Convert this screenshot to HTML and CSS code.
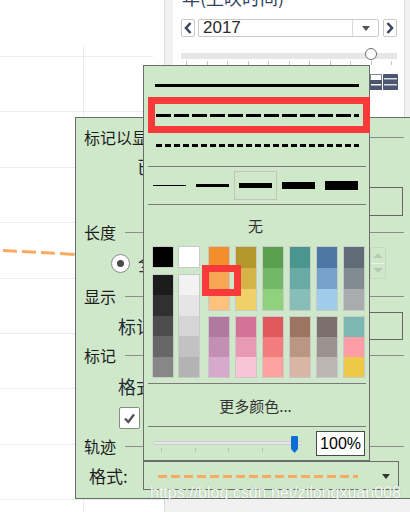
FILE: index.html
```html
<!DOCTYPE html>
<html lang="zh">
<head>
<meta charset="utf-8">
<title>Line style</title>
<link rel="stylesheet" href="styles.css">
</head>
<body>
<div class="screen">
  <div class="chart">
    <svg class="chart-svg" width="164" height="512" viewBox="0 0 164 512">
      <g stroke="#ececec" stroke-width="1">
        <line x1="0" y1="56.5" x2="153" y2="56.5"/>
        <line x1="0" y1="111.5" x2="153" y2="111.5"/>
        <line x1="0" y1="167.5" x2="153" y2="167.5"/>
        <line x1="0" y1="222.5" x2="153" y2="222.5"/>
        <line x1="0" y1="278.5" x2="153" y2="278.5"/>
        <line x1="0" y1="333.5" x2="153" y2="333.5"/>
        <line x1="0" y1="388.5" x2="153" y2="388.5"/>
        <line x1="0" y1="444.5" x2="153" y2="444.5"/>
        <line x1="0" y1="499.5" x2="164" y2="499.5"/>
        <line x1="83.5" y1="45" x2="83.5" y2="512"/>
      </g>
      <line x1="3" y1="250.5" x2="76" y2="254.5" stroke="#fbab62" stroke-width="3" stroke-dasharray="14 5"/>
      <circle cx="79" cy="254" r="4.5" fill="#5b7fb5"/>
    </svg>
  </div>
  <div class="side">
    <div class="card">
      <div class="title">年(上映时间)</div>
      <div class="year-row">
        <div class="nav">
          <svg width="10" height="14" viewBox="0 0 10 14"><polyline points="7.5,2 3,7 7.5,12" fill="none" stroke="#3b4760" stroke-width="2.6"/></svg>
        </div>
        <div class="select">
          <span class="select-value">2017</span>
          <span class="select-btn"><span class="tri-down"></span></span>
        </div>
        <div class="nav">
          <svg width="10" height="14" viewBox="0 0 10 14"><polyline points="2.5,2 7,7 2.5,12" fill="none" stroke="#3b4760" stroke-width="2.6"/></svg>
        </div>
      </div>
      <div class="slider"><span class="knob"></span></div>
      <div class="ticks"><span></span><span></span><span></span><span></span><span></span><span></span><span></span><span></span><span></span><span></span><span></span></div>
      <div class="icons">
        <svg width="28" height="16" viewBox="0 0 28 16">
          <rect x="0.5" y="0.5" width="11" height="15" fill="#fff" stroke="#7d879a"/>
          <rect x="0" y="6" width="12" height="10" fill="#4b5770"/>
          <rect x="1" y="10" width="10" height="1.5" fill="#fff"/>
          <rect x="13" y="0" width="15" height="16" rx="1" fill="#4b5770"/>
          <rect x="14" y="4" width="13" height="1.5" fill="#d9dde4"/>
          <rect x="14" y="10" width="13" height="1.5" fill="#d9dde4"/>
        </svg>
      </div>
    </div>
  </div>

  <div class="dialog">
    <div class="hdr"><span>标记以显示</span><i class="rule"></i></div>
    <div class="row r2"><span class="big">已选择</span></div>
    <div class="row r3"><span class="box"></span></div>
    <div class="hdr h-gap5"><span>长度</span><i class="rule"></i></div>
    <div class="row r5">
      <span class="radio"><span class="radio-dot"></span></span>
      <span class="big r5-text">全部</span>
      <span class="spin"><span class="spin-up"></span><span class="spin-down"></span></span>
    </div>
    <div class="hdr h-gap6"><span>显示</span><i class="rule"></i></div>
    <div class="row r7"><span class="big">标记标签</span><span class="box box-r7"></span></div>
    <div class="hdr h-gap4"><span>标记</span><i class="rule"></i></div>
    <div class="row r9"><span class="big">格式</span></div>
    <div class="row r10">
      <span class="check">
        <svg width="19" height="20" viewBox="0 0 19 20"><polyline points="5,10.5 8.3,14 14,6.5" fill="none" stroke="#555" stroke-width="2.4"/></svg>
      </span>
    </div>
    <div class="hdr h-gap6"><span>轨迹</span><i class="rule"></i></div>
    <div class="row r12">
      <span class="fmt-label">格式:</span>
      <div class="combo"><span class="combo-line"></span><span class="combo-arrow"></span></div>
    </div>
  </div>

  <div class="popup">
    <div class="ls ls-first"><i class="solid"></i></div>
    <div class="ls"><i class="dash"></i></div>
    <div class="ls"><i class="dot"></i></div>
    <div class="sep sep1"></div>
    <div class="widths">
      <span class="w"><i class="w1"></i></span>
      <span class="w"><i class="w3"></i></span>
      <span class="w sel"><i class="w5"></i></span>
      <span class="w"><i class="w7"></i></span>
      <span class="w"><i class="w9"></i></span>
    </div>
    <div class="sep sep2"></div>
    <div class="none">无</div>
    <div class="palette">
      <div class="pcol pc-g1">
        <div class="grp g-sq"><span style="background:#000000"></span></div>
        <div class="grp g-long">
          <span style="background:#1c1c1c"></span><span style="background:#303030"></span><span style="background:#4d4d4d"></span><span style="background:#676767"></span><span style="background:#878787"></span>
        </div>
      </div>
      <div class="pcol pc-g2">
        <div class="grp g-sq"><span style="background:#ffffff"></span></div>
        <div class="grp g-long">
          <span style="background:#f2f2f2"></span><span style="background:#e5e5e5"></span><span style="background:#d5d5d5"></span><span style="background:#c2c2c2"></span><span style="background:#b3b3b3"></span>
        </div>
      </div>
      <div class="pcol">
        <div class="grp g-top"><span style="background:#f28e2c"></span><span style="background:#f8a855"></span><span style="background:#ffc17e"></span></div>
        <div class="grp g-bot"><span style="background:#b0799f"></span><span style="background:#c48fb5"></span><span style="background:#d6aacb"></span></div>
      </div>
      <div class="pcol">
        <div class="grp g-top"><span style="background:#b3972c"></span><span style="background:#d4b446"></span><span style="background:#f0d068"></span></div>
        <div class="grp g-bot"><span style="background:#d37296"></span><span style="background:#e89ab4"></span><span style="background:#f9c4d5"></span></div>
      </div>
      <div class="pcol">
        <div class="grp g-top"><span style="background:#599f4e"></span><span style="background:#72b866"></span><span style="background:#8fd17d"></span></div>
        <div class="grp g-bot"><span style="background:#e0585b"></span><span style="background:#f27d7c"></span><span style="background:#fda29e"></span></div>
      </div>
      <div class="pcol">
        <div class="grp g-top"><span style="background:#48968e"></span><span style="background:#6aaaa4"></span><span style="background:#88beb8"></span></div>
        <div class="grp g-bot"><span style="background:#9b7560"></span><span style="background:#ba9684"></span><span style="background:#d8b6a6"></span></div>
      </div>
      <div class="pcol">
        <div class="grp g-top"><span style="background:#4e77a6"></span><span style="background:#76a2c9"></span><span style="background:#a0cbe9"></span></div>
        <div class="grp g-bot"><span style="background:#7a6f6b"></span><span style="background:#9c9290"></span><span style="background:#bdb5b1"></span></div>
      </div>
      <div class="pcol pc-last">
        <div class="grp g-top"><span style="background:#5f6b76"></span><span style="background:#838b92"></span><span style="background:#a8acad"></span></div>
        <div class="grp g-bot"><span style="background:#7ab8b1"></span><span style="background:#fd9ea7"></span><span style="background:#edc945"></span></div>
      </div>
    </div>
    <div class="sep sep3"></div>
    <div class="more">更多颜色...</div>
    <div class="sep"></div>
    <div class="opacity">
      <div class="oslider">
        <div class="otrack"></div>
        <div class="oticks"><span></span><span></span><span></span><span></span><span></span></div>
        <svg class="othumb" width="7" height="17" viewBox="0 0 7 17"><path d="M1.2 0 H5.8 Q7 0 7 1.2 V13 L3.5 17 L0 13 V1.2 Q0 0 1.2 0 Z" fill="#0b6fd6"/></svg>
      </div>
      <div class="opct">100%</div>
    </div>
  </div>

  <div class="mark mark-line"></div>
  <div class="mark mark-cell"></div>
  <div class="watermark">https://blog.csdn.net/zilongxuan008</div>
</div>
</body>
</html>
```

FILE: styles.css
```css
* { box-sizing: border-box; margin: 0; padding: 0; }
html, body { width: 410px; height: 512px; overflow: hidden; }
body {
  background: #fff;
  font-family: "Noto Sans CJK SC", "Noto Sans", sans-serif;
  color: #1c1c1c;
}
.screen { display: flex; width: 410px; height: 512px; position: relative; overflow: hidden; }

/* chart */
.chart { width: 164px; flex: none; }
.chart-svg { display: block; }

/* right side panel */
.side {
  flex: 1;
  display: flex;
  flex-direction: column;
  background: #f1f1f1;
  border-left: 1px solid #d9d9d9;
  padding: 0 5px 14px 8px;
}
.card {
  flex: 1;
  background: #fff;
  border-right: 1px solid #dadada;
  padding: 0 7px 0 8px;
}
.title {
  font-size: 18px;
  line-height: 20px;
  margin-top: -13px;
  color: #34425c;
  white-space: nowrap;
  padding-left: 1px;
}
.year-row { display: flex; margin-top: 12px; height: 18px; }
.nav {
  width: 14px; height: 18px; flex: none;
  border: 1px solid #c9c9c9; border-radius: 2px; background: #fff;
  display: flex; align-items: center; justify-content: center;
}
.select {
  width: 181px; flex: none; margin: 0 4px 0 3px;
  border: 1px solid #c9c9c9; border-radius: 2px; background: #fff;
  display: flex; align-items: center;
  font: 17px/16px "Liberation Sans", Arial, sans-serif; color: #2b2b2b;
}
.select-value { flex: 1; padding-left: 4px; }
.select-btn {
  width: 26px; height: 100%;
  border-left: 1px solid #d9d9d9;
  display: flex; align-items: center; justify-content: center;
}
.tri-down {
  width: 0; height: 0;
  border-left: 4.5px solid transparent;
  border-right: 4.5px solid transparent;
  border-top: 5px solid #555;
}
.slider { position: relative; height: 6px; margin-top: 16px; background: #e6e6e6; }
.knob {
  position: absolute; left: 184px; top: -5px;
  width: 12px; height: 12px; border-radius: 50%;
  border: 1.5px solid #6f6f6f; background: #fff;
}
.ticks { display: flex; justify-content: space-between; margin: 2px 5px 0 5px; height: 4px; }
.ticks span { width: 1px; background: #c4c4c4; }
.icons { display: flex; justify-content: flex-end; margin-top: 9px; margin-right: -1px; }
.icons svg { display: block; }

/* dialog (window behind) */
.dialog {
  position: absolute; left: 75px; top: 117px; width: 345px;
  border: 1px solid #6c6c6c; background: #cfe8ca;
  padding: 8px 15px 8px 8px;
  font-size: 16px; color: #1c1c1c;
}
.hdr { display: flex; align-items: center; height: 23px; line-height: 23px; white-space: nowrap; }
.hdr .rule { display: block; flex: 1; height: 1px; background: #8c8c8c; margin-left: 9px; }
.h-gap5 { margin-top: 5px; }
.h-gap6 { margin-top: 6px; }
.h-gap4 { margin-top: 4px; }
.row { display: flex; align-items: center; }
.big { font-size: 18px; line-height: 22px; color: #232a36; white-space: nowrap; }
.r2 { height: 34px; padding-left: 53px; }
.r3 { height: 29px; margin-top: 4px; padding-left: 100px; }
.box { display: block; flex: 1; height: 100%; border: 1px solid #666; margin-right: 1px; }
.r5 { height: 32px; margin-top: 3px; padding-left: 27px; padding-right: 18px; }
.radio {
  width: 19px; height: 19px; border-radius: 50%;
  border: 1px solid #8a8a8a; background: #fff;
  display: flex; align-items: center; justify-content: center;
}
.radio-dot { width: 7px; height: 7px; border-radius: 50%; background: #4a4a4a; }
.r5-text { margin-left: 8px; }
.spin {
  margin-left: auto; width: 16px; height: 32px;
  border: 1px solid #c6d8c2; border-radius: 2px;
  display: flex; flex-direction: column;
}
.spin-up, .spin-down { flex: 1; display: flex; align-items: center; justify-content: center; }
.spin-up { border-bottom: 1px solid #e8f2e6; }
.spin-up::before {
  content: ""; border-left: 5px solid transparent; border-right: 5px solid transparent;
  border-bottom: 5px solid #b9c9b6;
}
.spin-down::before {
  content: ""; border-left: 5px solid transparent; border-right: 5px solid transparent;
  border-top: 5px solid #b9c9b6;
}
.r7 { height: 28px; margin-top: 4px; padding-left: 34px; }
.box-r7 { margin-left: 30px; }
.r9 { height: 28px; margin-top: 5px; padding-left: 34px; }
.r10 { height: 22px; margin-top: 7px; padding-left: 35px; }
.check {
  width: 21px; height: 22px; background: #fff;
  border: 1px solid #8a8a8a; border-radius: 2px;
  display: flex; align-items: center; justify-content: center;
}
.r12 { height: 29px; margin-top: 3px; padding-left: 5px; }
.fmt-label { width: 54px; flex: none; font-size: 17px; line-height: 22px; }
.combo {
  width: 256px; height: 29px; flex: none;
  border: 1px solid #6c6c6c;
  display: flex; align-items: center;
  padding: 1px 8px 0 14px;
}
.combo-line {
  display: block; width: 200px; height: 3px;
  background: repeating-linear-gradient(to right, #fbab5f 0 9px, transparent 9px 13px);
}
.combo-arrow {
  margin-left: auto; width: 0; height: 0;
  border-left: 4.5px solid transparent; border-right: 4.5px solid transparent;
  border-top: 5px solid #333;
}

/* popup line/colour picker */
.popup {
  position: absolute; left: 143px; top: 65px; width: 227px; height: 396px;
  border: 1px solid #6c6c6c; background: #cfe8ca;
  display: flex; flex-direction: column;
}
.ls { height: 30px; flex: none; display: flex; align-items: center; padding: 0 10px 0 12px; }
.ls-first { margin-top: 4px; padding-left: 11px; }
.ls i { display: block; flex: 1; height: 3px; }
.solid { background: #000; }
.dash { background: repeating-linear-gradient(to right, #000 0 15px, transparent 15px 18px); }
.dot { background: repeating-linear-gradient(to right, #000 0 6px, transparent 6px 9px); }
.sep { height: 1px; flex: none; background: #7a7a7a; margin: 0 3px 0 4px; }
.sep1 { margin-top: 6px; }
.sep2 { margin-top: 4px; }
.sep3 { margin-top: 5px; }
.widths { display: flex; height: 29px; margin-top: 4px; padding-left: 4px; flex: none; }
.w { width: 43px; display: flex; align-items: center; justify-content: center; }
.w.sel { border: 1px solid #c3c3c3; }
.w i { display: block; width: 33px; background: #000; }
.w1 { height: 1px; }
.w3 { height: 3px; }
.w5 { height: 5px; }
.w7 { height: 7px; }
.w9 { height: 9px; }
.none { height: 41px; flex: none; display: flex; align-items: center; justify-content: center; font-size: 15px; color: #333; padding-right: 2px; }
.palette { display: flex; height: 132px; flex: none; padding-left: 8px; }
.pcol { width: 22px; flex: none; display: flex; flex-direction: column; margin-right: 5px; }
.pc-g1 { margin-right: 4px; }
.pc-g2 { margin-right: 8px; }
.pc-last { margin-right: 0; }
.grp { border: 1px solid #c9c9c9; display: flex; flex-direction: column; flex: none; }
.grp span { display: block; flex: 1; }
.g-sq { height: 22px; }
.g-long { height: 104px; margin-top: 6px; }
.g-top { height: 65px; }
.g-bot { height: 62px; margin-top: 5px; }
.more { height: 42px; flex: none; display: flex; align-items: center; justify-content: center; font-size: 15px; color: #333; padding-right: 2px; }
.opacity { display: flex; align-items: center; height: 33px; flex: none; padding-left: 9px; }
.oslider { width: 149px; height: 33px; position: relative; display: flex; flex-direction: column; padding-top: 14px; }
.otrack { height: 4px; background: #e6e6e6; border: 1px solid #cdcdcd; border-radius: 1px; }
.oticks { display: flex; justify-content: space-between; margin: 3px 6px 0 8px; height: 4px; }
.oticks span { width: 1px; background: #b8c5b5; }
.othumb { position: absolute; left: 138px; top: 9px; display: block; }
.opct {
  margin-left: 14px; width: 49px; height: 25px;
  background: #fff; border: 1px solid #4a4a4a;
  font: 16px/23px "Liberation Sans", Arial, sans-serif; color: #000;
  text-align: right; padding-right: 3px;
}

/* screenshot annotations */
.mark { position: absolute; border: 7px solid #f73939; }
.mark-line { left: 148px; top: 97px; width: 222px; height: 36px; }
.mark-cell { left: 202px; top: 265px; width: 39px; height: 31px; }

.watermark {
  position: absolute; left: 150px; top: 485px;
  font: 16px/16px "Liberation Sans", Arial, sans-serif;
  color: rgba(255,255,255,0.97);
  text-shadow: 0 0 1px rgba(90,90,90,0.45);
  white-space: nowrap;
}
```
